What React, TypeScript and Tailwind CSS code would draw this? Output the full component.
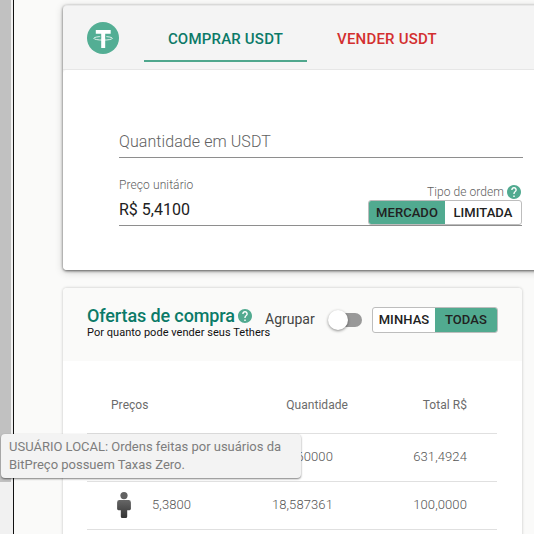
import { useState } from "react";
import clsx from "clsx";

interface Offer {
  id: string;
  price: string;
  amount: string;
  total: string;
  local: boolean;
}

const offers: Offer[] = [
  { id: "1", price: "5,3900", amount: "17,160000", total: "631,4924", local: true },
  { id: "2", price: "5,3800", amount: "18,587361", total: "100,0000", local: true },
];

function TetherLogo() {
  return (
    <svg className="w-8 h-8 shrink-0" viewBox="0 0 32 32">
      <circle cx="16" cy="16" r="16" fill="#53ae94" />
      <path fill="#fff" d="M8.800 7.900h14.900v3.800h-5.500v14.300h-4V11.700H8.800z" />
      <ellipse cx="16.100" cy="16.300" rx="9.300" ry="1.800" fill="none" stroke="#fff" strokeWidth="0.800" />
      <path fill="#53ae94" d="M14.200 14h-1v1.400h1zM18.200 14h1v1.400h-1z" />
    </svg>
  );
}

function HelpIcon({ className }: { className?: string }) {
  return (
    <svg className={clsx("shrink-0", className)} viewBox="2 2 20 20" fill="#51aa90">
      <circle cx="12" cy="12" r="9" fill="#fff" />
      <path d="M12 2C6.480 2 2 6.480 2 12s4.480 10 10 10 10-4.480 10-10S17.520 2 12 2zm1 17h-2v-2h2v2zm2.070-7.750l-.9.920C13.450 12.900 13 13.500 13 15h-2v-.5c0-1.100.45-2.100 1.170-2.830l1.240-1.260c.37-.36.59-.86.59-1.410 0-1.100-.9-2-2-2s-2 .9-2 2H8c0-2.210 1.790-4 4-4s4 1.790 4 4c0 .88-.36 1.680-.93 2.250z" />
    </svg>
  );
}

function PersonIcon() {
  return (
    <svg className="w-[14px] h-[26px]" viewBox="0 0 14 26">
      <defs>
        <linearGradient id="person" x1="0" y1="0" x2="0" y2="1">
          <stop offset="0" stopColor="#666" />
          <stop offset="1" stopColor="#333" />
        </linearGradient>
      </defs>
      <circle cx="7" cy="3.600" r="3.600" fill="#626262" />
      <path
        fill="url(#person)"
        d="M2.500 8h9a2.400 2.400 0 0 1 2.400 2.400v6.400a1.400 1.400 0 0 1-1.400 1.400H10.200V24.500a1.500 1.500 0 0 1-1.500 1.500H5.300a1.500 1.500 0 0 1-1.500-1.500V18.200H1.500A1.400 1.400 0 0 1 .1 16.800v-6.400A2.400 2.400 0 0 1 2.500 8z"
      />
    </svg>
  );
}

function OrderForm() {
  const [orderType, setOrderType] = useState<"market" | "limit">("market");

  return (
    <section className="w-[520px] h-[265px] bg-[#f4f4f4] rounded-[4px] overflow-hidden border-t border-[#e8e8e8] shadow-[0_1px_3px_rgba(0,0,0,0.6),0_2px_8px_rgba(0,0,0,0.18)]">
      {/* Abas */}
      <div className="h-[64px] flex border-b border-[#e6e6e6] pl-6">
        <div className="pt-4">
          <TetherLogo />
        </div>
        <button className="ml-[25px] w-[163px] h-[56px] pt-3 border-b-2 border-[#4fa78d] text-[#0b7a68] text-[15px] font-medium tracking-[0.2px]">
          COMPRAR USDT
        </button>
        <button className="w-[160px] h-[56px] pt-[10px] text-[#d32f2f] text-[15px] font-medium tracking-[0.2px]">
          VENDER USDT
        </button>
      </div>

      <div className="h-[200px] pl-[56px] pt-[60px] bg-white rounded-t-[4px]">
        <div className="w-[404px] h-[28px] border-b border-[#8e8e8e] text-base leading-[24px] font-light tracking-[0.08px] text-[#616161]">
          Quantidade em USDT
        </div>
        <div className="w-[403px] h-[68px] flex justify-between border-b border-[#8e8e8e]">
          <div className="pt-[19px]">
            <div className="text-xs leading-4 font-light tracking-[0.1px] text-[#616161]">Preço unitário</div>
            <div className="mt-[5px] text-base leading-6 text-[#212121]">R$ 5,4100</div>
          </div>
          <div className="pt-[27px] flex flex-col items-end">
            <div className="h-[15px] -mt-px mb-px flex items-center gap-[3px] pr-px text-xs font-light tracking-[0.06px] text-[#616161]">
              Tipo de ordem
              <HelpIcon className="w-[14px] h-[14px]" />
            </div>
            <div className="w-[154px] h-[26px] flex border border-[#bdbdbd] rounded-[3px] overflow-hidden text-[13px] font-medium tracking-[0.05px] text-[#212121]">
              <button
                onClick={() => setOrderType("market")}
                className={clsx("w-[76px]", orderType === "market" && "bg-[#51aa90]")}
              >
                MERCADO
              </button>
              <button
                onClick={() => setOrderType("limit")}
                className={clsx("flex-1", orderType === "limit" && "bg-[#51aa90]")}
              >
                LIMITADA
              </button>
            </div>
          </div>
        </div>
      </div>
    </section>
  );
}

function Offers() {
  const [filter, setFilter] = useState<"mine" | "all">("all");

  return (
    <section className="w-[459px] h-[300px] mt-[18px] bg-white rounded-[4px] overflow-hidden shadow-[0_0_3px_rgba(0,0,0,0.24)]">
      <header className="h-[73px] flex bg-[#fafaf9] pl-6">
        <div className="w-[178px] pt-[17px] whitespace-nowrap">
          <div className="h-[21px] flex items-center gap-[3px] text-lg leading-[21px] font-medium tracking-[-0.12px] text-[#0b7a68]">
            Ofertas de compra
            <HelpIcon className="w-[14px] h-[14px]" />
          </div>
          <div className="text-[11px] leading-[13px] tracking-[0.04px] text-[#111]">
            Por quanto pode vender seus Tethers
          </div>
        </div>
        <span className="mt-[21px] w-[67px] text-sm leading-5 text-[#444]">Agrupar</span>
        <div className="mt-[25px] w-[30px] h-[14px] rounded-full bg-[#999] flex items-center">
          <span className="w-5 h-5 -ml-[4px] shrink-0 rounded-full bg-white shadow-[0_1px_3px_rgba(0,0,0,0.45)]" />
        </div>
        <div className="ml-[10px] mt-[19px] w-[126px] h-[26px] flex border border-[#bdbdbd] rounded-[3px] overflow-hidden bg-white text-[13px] font-medium tracking-[0.1px] text-[#212121]">
          <button
            onClick={() => setFilter("mine")}
            className={clsx("w-[62px]", filter === "mine" && "bg-[#51aa90]")}
          >
            MINHAS
          </button>
          <button
            onClick={() => setFilter("all")}
            className={clsx("flex-1", filter === "all" && "bg-[#51aa90]")}
          >
            TODAS
          </button>
        </div>
      </header>

      <div className="ml-6 mr-[25px] text-[#6b6b6b]">
        <div className="h-[73px] pt-[33px] flex border-b border-[#e0e0e0] text-xs leading-[22px] tracking-[0.05px]">
          <span className="w-[104px] pl-6">Preços</span>
          <span className="w-[157px] text-right">Quantidade</span>
          <span className="w-[119px] text-right">Total R$</span>
        </div>
        {offers.map((offer) => (
          <div
            key={offer.id}
            className="h-12 pb-[2px] flex items-center border-b border-[#e0e0e0] text-[13px] font-light tracking-[0.1px] text-[#555]"
          >
            <span className="w-[65px] pl-[30px]">{offer.local && <PersonIcon />}</span>
            <span className="w-[39px]">{offer.price}</span>
            <span className="w-[142px] text-right">{offer.amount}</span>
            <span className="w-[134px] text-right">{offer.total}</span>
          </div>
        ))}
      </div>
    </section>
  );
}

export default function App() {
  return (
    <div className="relative w-[534px] h-[534px] flex overflow-hidden bg-[#fafaf9] font-['Roboto',sans-serif]">
      {/* Barra de rolagem */}
      <div className="w-[13px] shrink-0 bg-[#f1f1f1]">
        <div className="w-[11px] h-[482px] bg-[#c1c1c1]" />
      </div>
      <div className="w-px shrink-0 bg-[#111]" />

      <main className="pl-[49px] pt-[5px]">
        <OrderForm />
        <Offers />
      </main>

      {/* Tooltip sobre a primeira linha da tabela */}
      <div className="absolute left-px top-[434px] w-[300px] h-[44px] px-2 pt-1 rounded-[4px] bg-[#f3f3f3] text-[13px] leading-[18px] tracking-[-0.01px] text-[#7d7d7d] shadow-[0_1px_2px_rgba(0,0,0,0.5)]">
        USUÁRIO LOCAL: Ordens feitas por usuários da BitPreço possuem Taxas Zero.
      </div>
    </div>
  );
}
